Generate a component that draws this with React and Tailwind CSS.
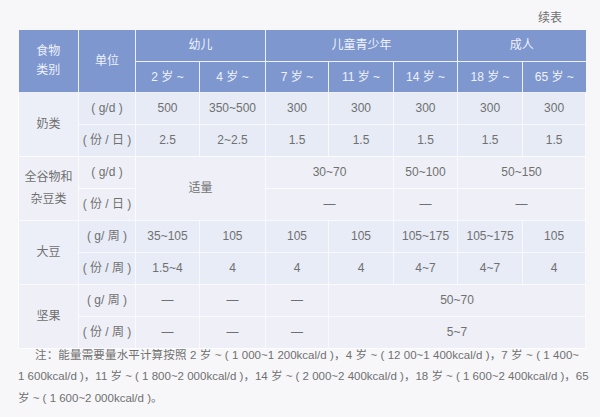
import React from 'react';

const hd = 'border-[1.5px] border-[#eef1fa] text-center font-normal';
const td = 'border border-white/70 text-center whitespace-nowrap p-0';
const full = 'text-justify [text-align-last:justify] whitespace-nowrap';

function Row({ bg, cells }) {
  return <tr className={`h-8 ${bg}`}>{cells}</tr>;
}

export default function App() {
  const milk = 'bg-[#e6ebf6]';
  const grain = 'bg-[#eff0f7]';
  const soy = 'bg-[#e7ecf7]';
  const nut = 'bg-[#eeeff7]';

  return (
    <div
      className="w-[600px] h-[417px] bg-[#f7f7fa] text-[#707070] overflow-hidden"
      style={{ fontFamily: '"Liberation Sans", "Noto Sans CJK SC", sans-serif' }}
    >
      <div className="h-[30px] flex items-end justify-end pr-[38px] pb-[3px] text-[12px]">续表</div>
      <table className="ml-[18px] w-[567px] table-fixed border-collapse text-[12px]">
        <colgroup>
          <col className="w-[60px]" />
          <col className="w-[57px]" />
          <col className="w-[64px]" />
          <col className="w-[66px]" />
          <col className="w-[63px]" />
          <col className="w-[65px]" />
          <col className="w-[64px]" />
          <col className="w-[65px]" />
          <col className="w-[63px]" />
        </colgroup>
        <thead className="bg-[#7f97cf] text-[#eef2fb]">
          <tr className="h-[31px]">
            <th rowSpan={2} className={`${hd} border-t-0 border-l-0 leading-[19px]`}>食物<br />类别</th>
            <th rowSpan={2} className={`${hd} border-t-0`}>单位</th>
            <th colSpan={2} className={`${hd} border-t-0`}>幼儿</th>
            <th colSpan={3} className={`${hd} border-t-0`}>儿童青少年</th>
            <th colSpan={2} className={`${hd} border-t-0 border-r-0`}>成人</th>
          </tr>
          <tr className="h-[31px]">
            <th className={hd}>2 岁 ~</th>
            <th className={hd}>4 岁 ~</th>
            <th className={hd}>7 岁 ~</th>
            <th className={hd}>11 岁 ~</th>
            <th className={hd}>14 岁 ~</th>
            <th className={hd}>18 岁 ~</th>
            <th className={`${hd} border-r-0`}>65 岁 ~</th>
          </tr>
        </thead>
        <tbody>
          <Row bg={milk} cells={<>
            <td rowSpan={2} className={`${td} bg-[#eceff8]`}>奶类</td>
            <td className={td}>( g/d )</td>
            <td className={td}>500</td>
            <td className={td}>350~500</td>
            <td className={td}>300</td>
            <td className={td}>300</td>
            <td className={td}>300</td>
            <td className={td}>300</td>
            <td className={td}>300</td>
          </>} />
          <Row bg={milk} cells={<>
            <td className={td}>( 份 / 日 )</td>
            <td className={td}>2.5</td>
            <td className={td}>2~2.5</td>
            <td className={td}>1.5</td>
            <td className={td}>1.5</td>
            <td className={td}>1.5</td>
            <td className={td}>1.5</td>
            <td className={td}>1.5</td>
          </>} />
          <Row bg={grain} cells={<>
            <td rowSpan={2} className={`${td} leading-[22px]`}>全谷物和<br />杂豆类</td>
            <td className={td}>( g/d )</td>
            <td rowSpan={2} colSpan={2} className={td}>适量</td>
            <td colSpan={2} className={td}>30~70</td>
            <td className={td}>50~100</td>
            <td colSpan={2} className={td}>50~150</td>
          </>} />
          <Row bg={grain} cells={<>
            <td className={td}>( 份 / 日 )</td>
            <td colSpan={2} className={td}>—</td>
            <td className={td}>—</td>
            <td colSpan={2} className={td}>—</td>
          </>} />
          <Row bg={soy} cells={<>
            <td rowSpan={2} className={`${td} bg-[#eceff8]`}>大豆</td>
            <td className={td}>( g/ 周 )</td>
            <td className={td}>35~105</td>
            <td className={td}>105</td>
            <td className={td}>105</td>
            <td className={td}>105</td>
            <td className={td}>105~175</td>
            <td className={td}>105~175</td>
            <td className={td}>105</td>
          </>} />
          <Row bg={soy} cells={<>
            <td className={td}>( 份 / 周 )</td>
            <td className={td}>1.5~4</td>
            <td className={td}>4</td>
            <td className={td}>4</td>
            <td className={td}>4</td>
            <td className={td}>4~7</td>
            <td className={td}>4~7</td>
            <td className={td}>4</td>
          </>} />
          <Row bg={nut} cells={<>
            <td rowSpan={2} className={td}>坚果</td>
            <td className={td}>( g/ 周 )</td>
            <td className={td}>—</td>
            <td className={td}>—</td>
            <td className={td}>—</td>
            <td colSpan={4} className={td}>50~70</td>
          </>} />
          <Row bg={nut} cells={<>
            <td className={td}>( 份 / 周 )</td>
            <td className={td}>—</td>
            <td className={td}>—</td>
            <td className={td}>—</td>
            <td colSpan={4} className={td}>5~7</td>
          </>} />
        </tbody>
      </table>
      <div className="ml-[18px] mt-[-4px] w-[565px] text-[11.5px] leading-[21.5px]">
        <div className={`${full} pl-[17px] pr-[4px]`}>
          注：能量需要量水平计算按照 2 岁 ~ ( 1 000~1 200kcal/d )，4 岁 ~ ( 12 00~1 400kcal/d )，7 岁 ~ ( 1 400~
        </div>
        <div className={full}>
          1 600kcal/d )，11 岁 ~ ( 1 800~2 000kcal/d )，14 岁 ~ ( 2 000~2 400kcal/d )，18 岁 ~ ( 1 600~2 400kcal/d )，65
        </div>
        <div className="whitespace-nowrap">岁 ~ ( 1 600~2 000kcal/d )。</div>
      </div>
    </div>
  );
}
